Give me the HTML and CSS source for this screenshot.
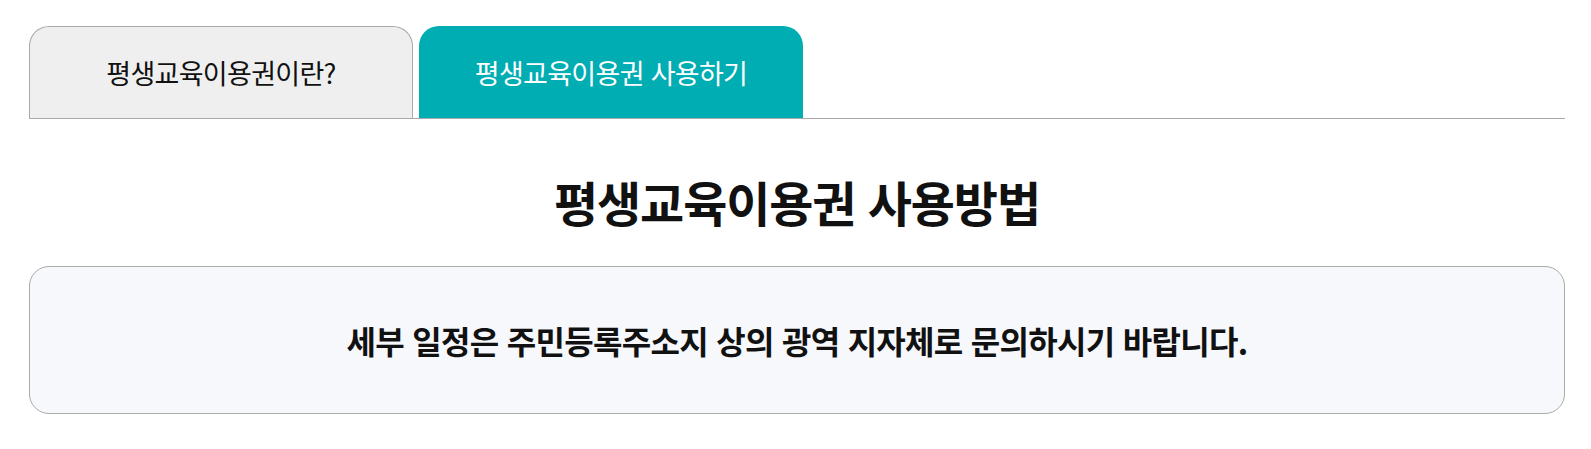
FILE: index.html
```html
<!DOCTYPE html>
<html lang="ko">
<head>
<meta charset="utf-8">
<title>평생교육이용권 사용하기</title>
<link rel="stylesheet" href="styles.css">
</head>
<body>
<div class="page">
  <div class="tabs">
    <a class="tab">평생교육이용권이란?</a>
    <a class="tab tab-active">평생교육이용권 사용하기</a>
  </div>
  <h2 class="title">평생교육이용권 사용방법</h2>
  <div class="notice">
    <p class="notice-text">세부 일정은 주민등록주소지 상의 광역 지자체로 문의하시기 바랍니다.</p>
  </div>
</div>
</body>
</html>
```

FILE: styles.css
```css
html, body {
  margin: 0;
  padding: 0;
  background: #ffffff;
}
body {
  font-family: "Noto Sans CJK KR", "Noto Sans", sans-serif;
  color: #111111;
}
.page {
  width: 1536px;
  margin: 0 0 0 29px;
  padding-top: 26px;
}
.tabs {
  display: flex;
  gap: 6px;
  border-bottom: 1px solid #a9a9a9;
  height: 92px;
}
.tab {
  box-sizing: border-box;
  width: 384px;
  height: 92px;
  display: flex;
  align-items: center;
  justify-content: center;
  border-radius: 20px 20px 0 0;
  font-size: 27px;
  font-weight: 400;
  letter-spacing: -0.7px;
  color: #111111;
  background: #efefef;
  border: 1px solid #a9a9a9;
  border-bottom: none;
}
.tab-active {
  background: #00adb3;
  border: none;
  color: #ffffff;
}
.title {
  margin: 0;
  padding-top: 52px;
  height: 96px;
  box-sizing: content-box;
  text-align: center;
  font-size: 48px;
  line-height: 60px;
  font-weight: 700;
  letter-spacing: -1.1px;
  color: #111111;
}
.notice {
  margin-top: -1px;
  box-sizing: border-box;
  height: 148px;
  border: 1px solid #aaaaaa;
  border-radius: 20px;
  background: #f7f8fc;
  display: flex;
  align-items: center;
  justify-content: center;
}
.notice-text {
  margin: 0;
  font-size: 32px;
  font-weight: 700;
  letter-spacing: -0.7px;
  color: #111111;
}
```
